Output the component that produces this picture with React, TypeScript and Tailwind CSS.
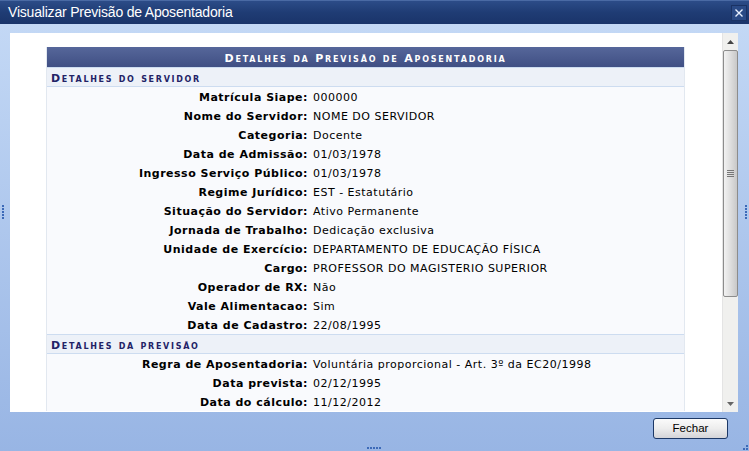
import React from "react";

const servidor = [
  ["Matrícula Siape", "000000"],
  ["Nome do Servidor", "NOME DO SERVIDOR"],
  ["Categoria", "Docente"],
  ["Data de Admissão", "01/03/1978"],
  ["Ingresso Serviço Público", "01/03/1978"],
  ["Regime Jurídico", "EST - Estatutário"],
  ["Situação do Servidor", "Ativo Permanente"],
  ["Jornada de Trabalho", "Dedicação exclusiva"],
  ["Unidade de Exercício", "DEPARTAMENTO DE EDUCAÇÃO FÍSICA"],
  ["Cargo", "PROFESSOR DO MAGISTERIO SUPERIOR"],
  ["Operador de RX", "Não"],
  ["Vale Alimentacao", "Sim"],
  ["Data de Cadastro", "22/08/1995"],
];

const previsao = [
  ["Regra de Aposentadoria", "Voluntária proporcional - Art. 3º da EC20/1998"],
  ["Data prevista", "02/12/1995"],
  ["Data do cálculo", "11/12/2012"],
];

const font = { fontFamily: '"DejaVu Sans", Verdana, sans-serif' };

function Row({ label, value }: { label: string; value: string }) {
  return (
    <div className="flex h-[19px] pt-[4px] items-center text-[11px] text-black tracking-[0.5px]">
      <div className="w-[262px] pr-[1px] text-right font-bold">{label}:</div>
      <div className="pl-[4px]">{value}</div>
    </div>
  );
}

function SubHeader({ children }: { children: string }) {
  return (
    <div
      className="h-[20px] pt-[4px] flex items-center pl-[4px] bg-[#edf1f8] border-y border-[#cddcf0] text-[11px] font-bold text-[#222266] tracking-[1.7px]"
      style={{ fontVariant: "small-caps" }}
    >
      {children}
    </div>
  );
}

function Dots({ vertical }: { vertical?: boolean }) {
  return (
    <div className={vertical ? "flex flex-col gap-[1px]" : "flex gap-[1px]"}>
      {[0, 1, 2, 3, 4].map((i) => (
        <span key={i} className="w-[2px] h-[2px] bg-[#3d6ab8]" />
      ))}
    </div>
  );
}

export default function App() {
  return (
    <div className="relative w-[749px] h-[451px] flex flex-col overflow-hidden" style={font}>
      {/* Title bar */}
      <div className="h-[24px] flex items-center justify-between pl-[8px] pr-[2px] bg-gradient-to-b from-[#2c4c88] via-[#1f3c74] to-[#1a346a] border-t border-[#4a6aa4]">
        <span className="text-white text-[14px] tracking-[-0.2px]" style={{ fontFamily: '"Liberation Sans", Arial, sans-serif' }}>
          Visualizar Previsão de Aposentadoria
        </span>
        <button className="w-[16px] h-[16px] flex items-center justify-center bg-[#2a4a86] border border-[#1a3264]">
          <svg width="10" height="10" viewBox="0 0 10 10">
            <path d="M1.5 1.5L8.5 8.5M8.5 1.5L1.5 8.5" stroke="#e8f0ff" strokeWidth="1.4" />
          </svg>
        </button>
      </div>

      {/* Body */}
      <div className="flex-1 flex flex-col bg-gradient-to-b from-[#c3d8f5] to-[#98b5e4] pl-[10px] pr-[11px] pt-[9px]">
        <div className="h-[379px] flex bg-white">
          <div className="flex-1 overflow-hidden pl-[36px] pr-[37px] pt-[14px]">
            <div className="border-x border-[#e2e8f0] bg-[#f9fafd]">
              <div
                className="h-[20px] pt-[4px] flex items-center justify-center bg-gradient-to-b from-[#56679a] to-[#404f84] text-white text-[11px] font-bold tracking-[1.8px]"
                style={{ fontVariant: "small-caps" }}
              >
                Detalhes da Previsão de Aposentadoria
              </div>
              <SubHeader>Detalhes do servidor</SubHeader>
              <div>
                {servidor.map(([l, v]) => (
                  <Row key={l} label={l} value={v} />
                ))}
              </div>
              <SubHeader>Detalhes da previsão</SubHeader>
              <div>
                {previsao.map(([l, v]) => (
                  <Row key={l} label={l} value={v} />
                ))}
              </div>
            </div>
          </div>

          {/* Scrollbar */}
          <div className="w-[16px] flex flex-col bg-[#f0f0ee] border-l border-[#e4e4e4]">
            <div className="h-[17px] flex items-center justify-center">
              <svg width="7" height="4" viewBox="0 0 7 4">
                <path d="M0 4L3.5 0L7 4Z" fill="#444" />
              </svg>
            </div>
            <div className="h-[247px] rounded-[2px] border border-[#8c8c8c] bg-gradient-to-r from-[#f2f2f2] via-[#dedede] to-[#c8c8c8] flex items-center justify-center">
              <div className="flex flex-col gap-[1px]">
                {[0, 1, 2, 3].map((i) => (
                  <span key={i} className="w-[7px] h-[1px] bg-[#777]" />
                ))}
              </div>
            </div>
            <div className="flex-1" />
            <div className="h-[17px] flex items-center justify-center">
              <svg width="7" height="4" viewBox="0 0 7 4">
                <path d="M0 0L3.5 4L7 0Z" fill="#666" />
              </svg>
            </div>
          </div>
        </div>

        <div className="flex justify-end pt-[6px] pr-[10px]">
          <button
            className="w-[75px] h-[21px] rounded-[3px] border border-[#1c3866] bg-gradient-to-b from-[#fbfbfb] via-[#ededed] to-[#d4d4d8] text-[11.5px] text-black"
            style={{ fontFamily: '"Liberation Sans", Arial, sans-serif' }}
          >
            Fechar
          </button>
        </div>
      </div>

      {/* Resize handles */}
      <div className="absolute left-[2px] top-[205px]">
        <Dots vertical />
      </div>
      <div className="absolute right-[2px] top-[205px]">
        <Dots vertical />
      </div>
      <div className="absolute left-[367px] bottom-[2px]">
        <Dots />
      </div>
      <div className="absolute right-[1px] bottom-[1px] w-[5px] h-[5px] border-r-2 border-b-2 border-dotted border-[#3d6ab8]" />
    </div>
  );
}
